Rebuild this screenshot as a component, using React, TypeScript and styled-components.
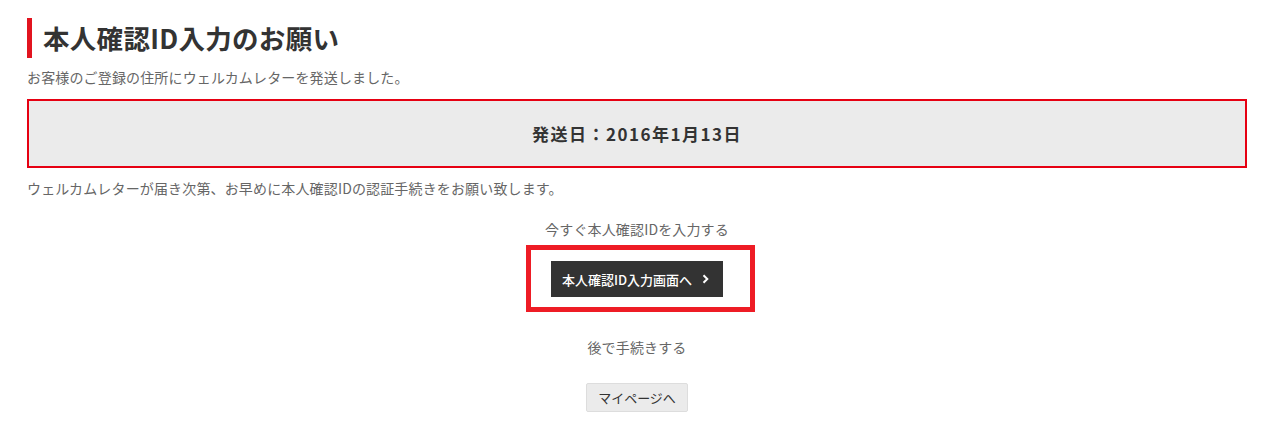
import React from "react";
import styled, { createGlobalStyle } from "styled-components";

const GlobalStyle = createGlobalStyle`
  body {
    margin: 0;
    background: #fff;
    font-family: "Noto Sans CJK JP", "Noto Sans", sans-serif;
  }
`;

const Page = styled("div")`
  display: flex;
  flex-direction: column;
  padding: 18px 38px 0 27px;
  color: #666;
`;

const Heading = styled("h1")`
  margin: 0;
  border-left: 5px solid #e2141f;
  padding-left: 11px;
  height: 40px;
  line-height: 40px;
  font-size: 26.5px;
  letter-spacing: 0.3px;
  font-weight: bold;
  color: #333;
`;

const Text = styled("p")<{ $top: number; $center?: boolean }>`
  margin: ${(p) => p.$top}px 0 0;
  font-size: 14px;
  line-height: 20px;
  letter-spacing: 0.15px;
  text-align: ${(p) => (p.$center ? "center" : "left")};
`;

const DateBox = styled("div")`
  margin-top: 12px;
  height: 65px;
  border: 2px solid #e60012;
  background: #ebebeb;
  display: flex;
  align-items: center;
  justify-content: center;
  font-size: 17px;
  letter-spacing: 1.5px;
  font-weight: bold;
  color: #333;
`;

const Center = styled("div")<{ $top: number }>`
  display: flex;
  justify-content: center;
  margin-top: ${(p) => p.$top}px;
`;

const Frame = styled("div")`
  border: 5px solid #ee1c25;
  padding: 11px 27px 10px 20px;
  margin-left: 7px;
`;

const PrimaryButton = styled("button")`
  display: flex;
  align-items: center;
  gap: 10px;
  height: 36px;
  width: 172px;
  padding: 0 12px 0 11px;
  border: none;
  background: #333;
  color: #fff;
  font-family: inherit;
  font-size: 13px;
  font-weight: 500;
  cursor: pointer;
`;

const SubButton = styled("button")`
  height: 29px;
  width: 102px;
  padding: 0;
  border: 1px solid #ddd;
  border-radius: 2px;
  background: #ebebeb;
  color: #333;
  font-family: inherit;
  font-size: 13px;
  cursor: pointer;
`;

const Chevron = () => (
  <svg width="7" height="10" viewBox="0 0 7 10">
    <path d="M1.5 1.2 L5.3 5 L1.5 8.8" fill="none" stroke="#fff" strokeWidth="2" />
  </svg>
);

export default function App() {
  return (
    <>
      <GlobalStyle />
      <Page>
        <Heading>本人確認ID入力のお願い</Heading>
        <Text $top={9}>お客様のご登録の住所にウェルカムレターを発送しました。</Text>
        <DateBox>発送日：2016年1月13日</DateBox>
        <Text $top={10}>
          ウェルカムレターが届き次第、お早めに本人確認IDの認証手続きをお願い致します。
        </Text>
        <Text $top={21} $center>
          今すぐ本人確認IDを入力する
        </Text>
        <Center $top={6}>
          <Frame>
            <PrimaryButton>
              本人確認ID入力画面へ
              <Chevron />
            </PrimaryButton>
          </Frame>
        </Center>
        <Text $top={25} $center>
          後で手続きする
        </Text>
        <Center $top={26}>
          <SubButton>マイページへ</SubButton>
        </Center>
      </Page>
    </>
  );
}
